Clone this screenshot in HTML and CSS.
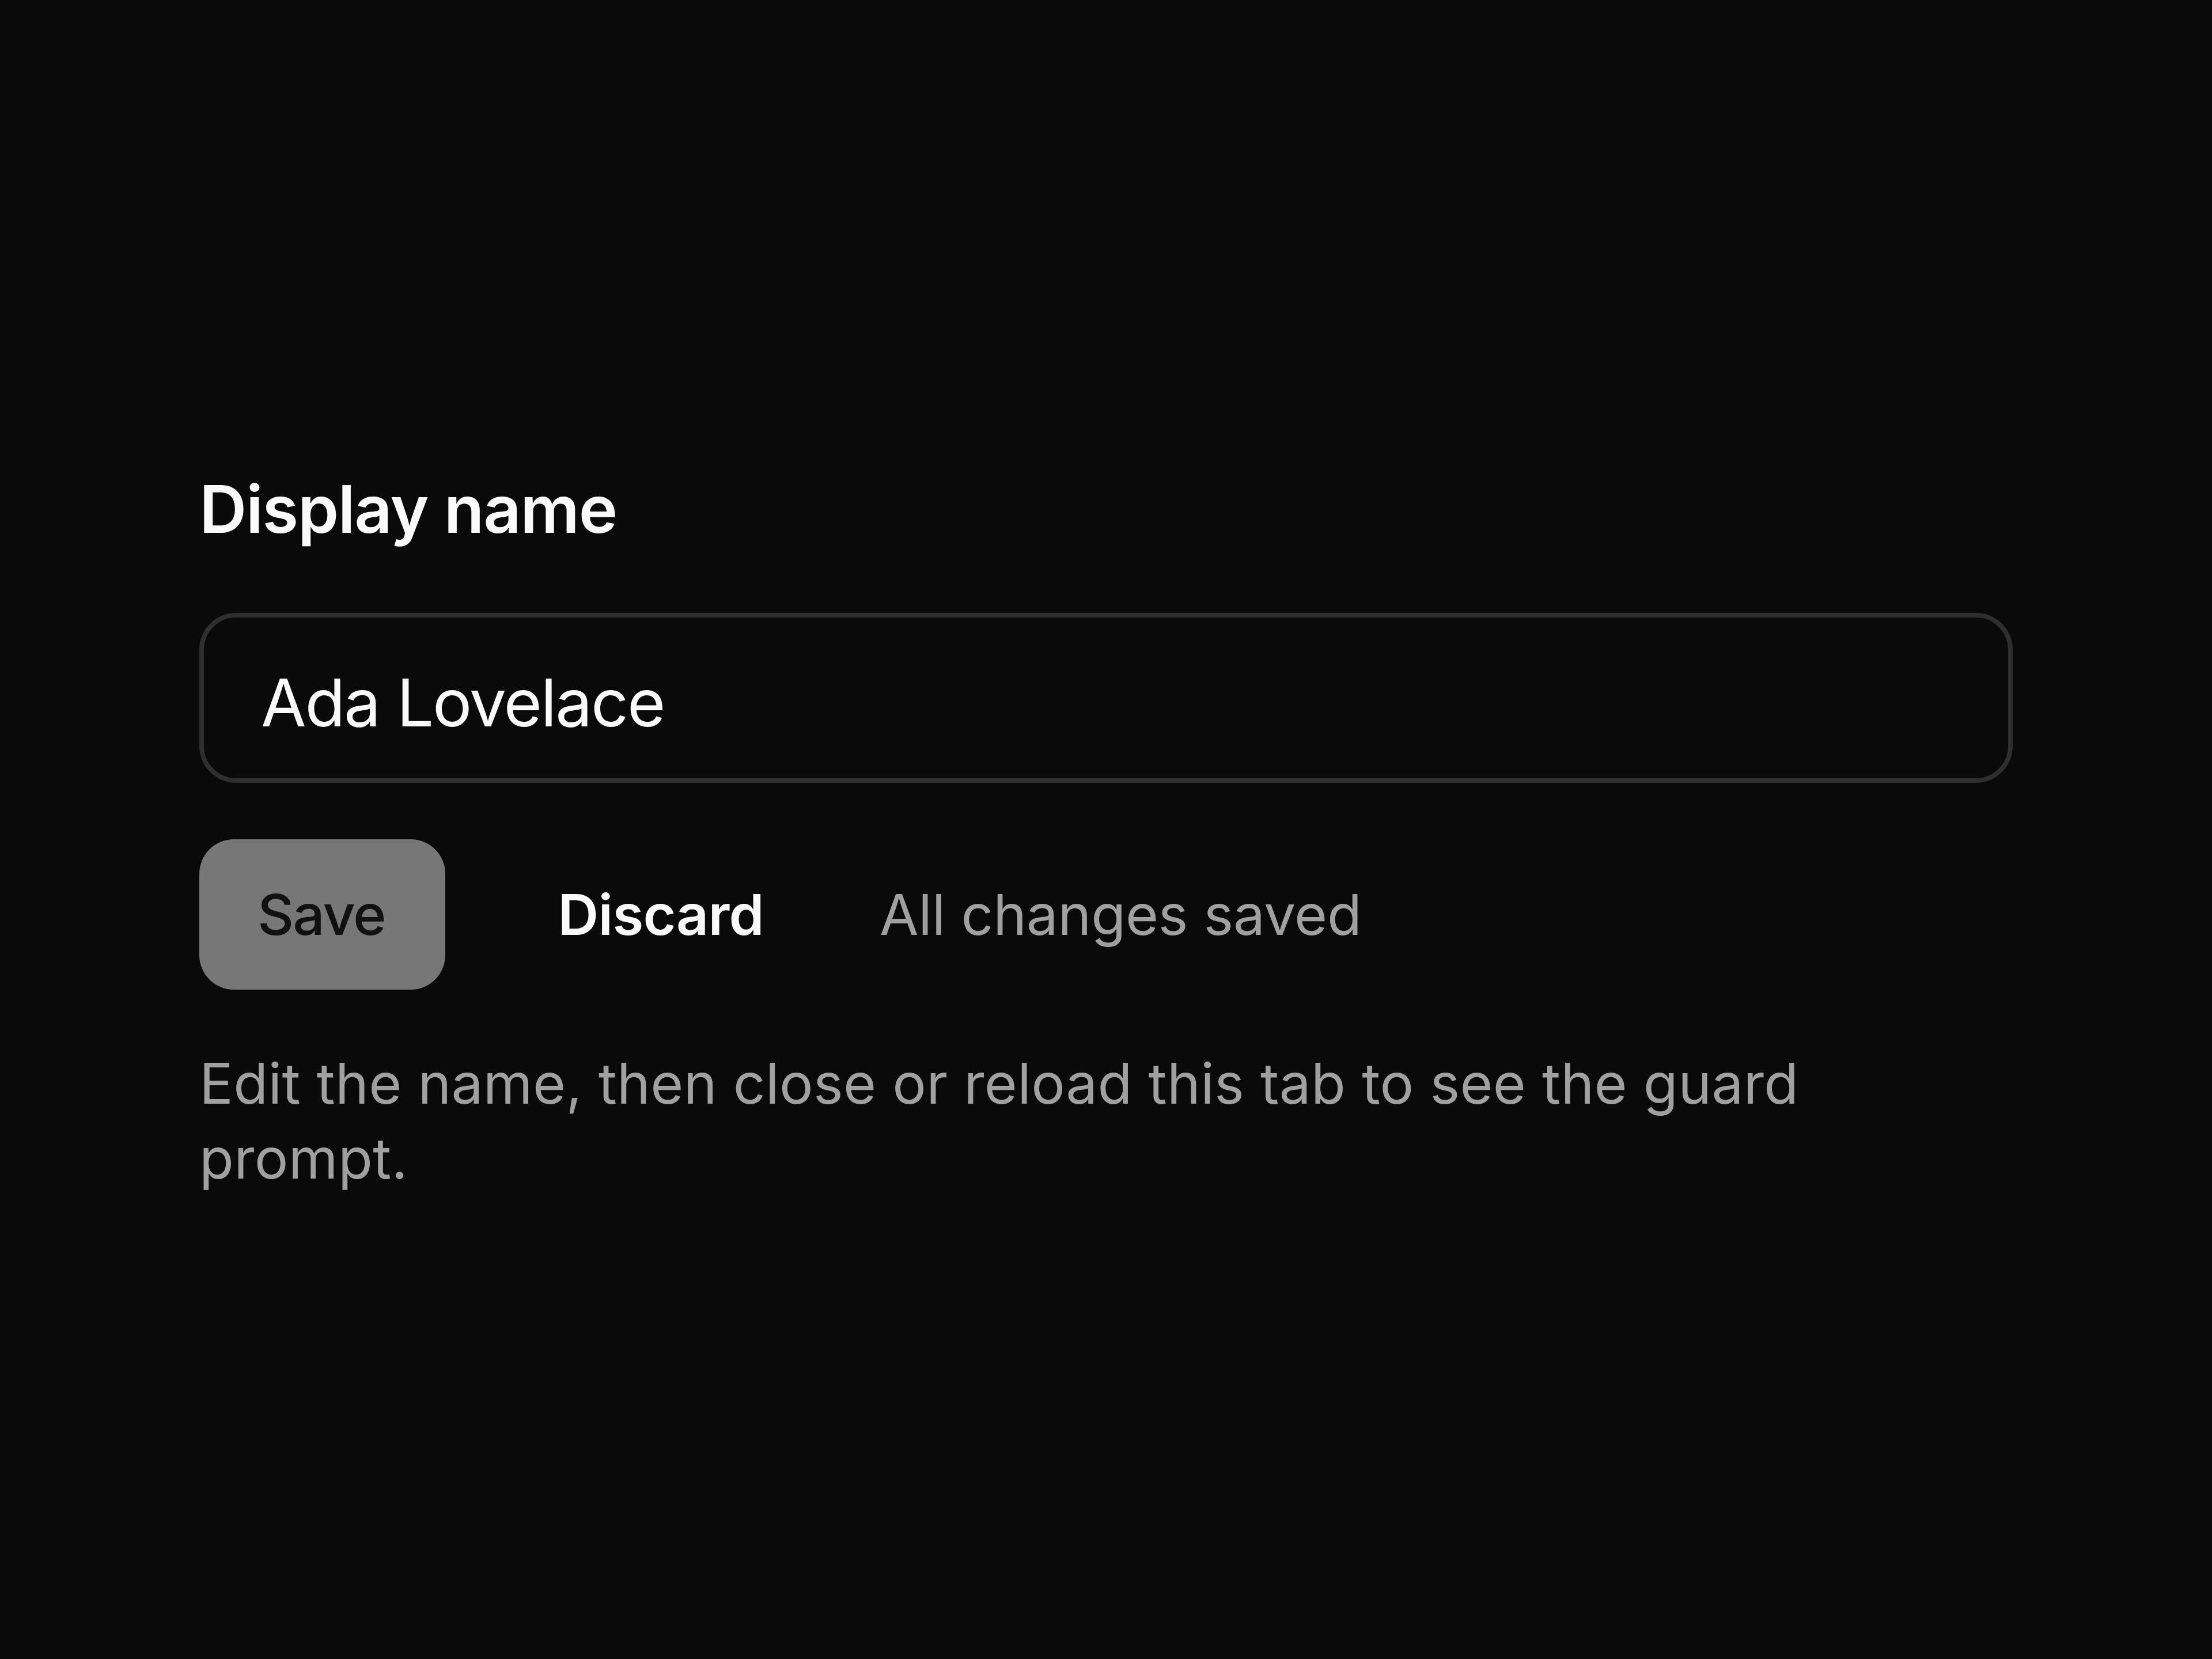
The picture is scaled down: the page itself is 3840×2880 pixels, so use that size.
FILE: index.html
```html
<!DOCTYPE html>
<html lang="en">
<head>
<meta charset="utf-8">
<title>Display name</title>
<link rel="stylesheet" href="styles.css">
</head>
<body>
<main class="page">
  <form class="panel">
    <label class="label" for="display-name">Display name</label>
    <input class="field" id="display-name" type="text" value="Ada Lovelace">
    <div class="actions">
      <button type="button" class="btn btn-save">Save</button>
      <button type="button" class="btn btn-discard">Discard</button>
      <span class="status">All changes saved</span>
    </div>
    <p class="help">Edit the name, then close or reload this tab to see the guard prompt.</p>
  </form>
</main>
</body>
</html>
```
FILE: styles.css
```css
html, body {
  margin: 0;
  background: #0a0a0a;
}

body {
  font-family: Inter, "Noto Sans", "Liberation Sans", sans-serif;
  color: #fafafa;
}

.page {
  box-sizing: border-box;
  min-height: 100vh;
  padding-top: 10px;
  display: flex;
  align-items: center;
  justify-content: center;
}

.panel {
  width: 3148px;
  display: flex;
  flex-direction: column;
  margin: 0;
}

.label {
  font-size: 114px;
  font-weight: 600;
  line-height: 139px;
  letter-spacing: -1.3px;
  color: #fafafa;
  margin-bottom: 111px;
}

.field {
  box-sizing: border-box;
  width: 100%;
  height: 295px;
  margin: 0;
  padding: 16px 99px 0;
  border: 8px solid #2f2f2f;
  border-radius: 64px;
  background: #0a0a0a;
  color: #fafafa;
  font-family: inherit;
  font-size: 114px;
  font-weight: 400;
  letter-spacing: -2.2px;
  outline: none;
}

.actions {
  display: flex;
  align-items: center;
  gap: 96px;
  margin-top: 98px;
}

.btn {
  margin: 0;
  border: none;
  font-family: inherit;
  font-size: 98px;
  line-height: normal;
  padding: 71px 104px;
  border-radius: 60px;
  cursor: pointer;
}

.btn-save {
  background: #777777;
  color: #111111;
  font-weight: 500;
  letter-spacing: -2px;
  padding-left: 101px;
  padding-right: 105px;
}

.btn-discard {
  background: transparent;
  color: #fafafa;
  font-weight: 600;
  letter-spacing: -0.7px;
  padding-left: 99px;
}

.status {
  margin-left: 1px;
  font-size: 98px;
  font-weight: 400;
  letter-spacing: -0.3px;
  color: #a0a0a0;
}

.help {
  margin: 98px 0 0;
  max-width: 2950px;
  font-size: 98px;
  line-height: 130px;
  letter-spacing: 0.27px;
  color: #a0a0a0;
}
```
